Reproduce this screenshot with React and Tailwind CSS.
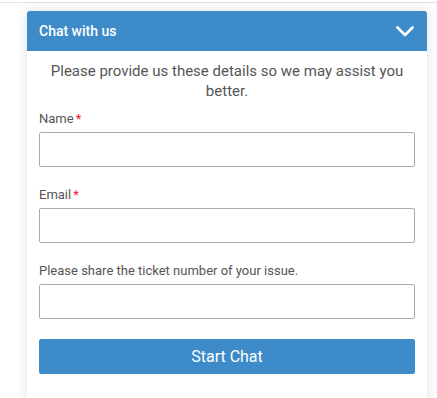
import React from "react";

const Field = ({ label, required }) => (
  <div className="flex flex-col">
    <label className="text-[13px] leading-[18px] text-[#555]">
      {label}
      {required && <span className="ml-[2px] text-[#f0142f]">*</span>}
    </label>
    <input
      type="text"
      className="mt-[4px] h-[35px] w-full rounded-[2px] border border-[#a5adb2] bg-white px-2 text-[14px] outline-none"
    />
  </div>
);

export default function App() {
  return (
    <div className="min-h-[398px] w-full overflow-hidden bg-white font-['Roboto',sans-serif]">
      {/* top border line */}
      <div className="mt-[2px] h-px w-full bg-[#e3e3e3]" />

      {/* Chat widget */}
      <div className="ml-[27px] mt-[8px] w-[400px] rounded-t-[3px] bg-white shadow-[0_0_14px_rgba(0,0,0,0.13)]">
        {/* Header */}
        <div className="flex h-[40px] items-center justify-between rounded-t-[3px] bg-[#3d8bc9] px-3">
          <span className="text-[14px] font-medium text-white">Chat with us</span>
          <svg width="18" height="11" viewBox="0 0 18 11" fill="none" className="mr-[1px]">
            <path d="M1.5 1.5L9 9L16.5 1.5" stroke="white" strokeWidth="2.6" strokeLinecap="round" strokeLinejoin="round" />
          </svg>
        </div>

        {/* Body */}
        <div className="flex flex-col px-3 pb-[30px] pt-[10px]">
          <p className="px-2 text-center text-[15px] leading-[20px] text-[#555]">
            Please provide us these details so we may assist you better.
          </p>

          <div className="mt-[9px] flex flex-col gap-[19px]">
            <Field label="Name" required />
            <Field label="Email" required />
            <Field label="Please share the ticket number of your issue." />
          </div>

          <button className="mt-[20px] h-[35px] w-full rounded-[2px] bg-[#3d8bc9] text-[16px] text-white">
            Start Chat
          </button>
        </div>
      </div>
    </div>
  );
}
